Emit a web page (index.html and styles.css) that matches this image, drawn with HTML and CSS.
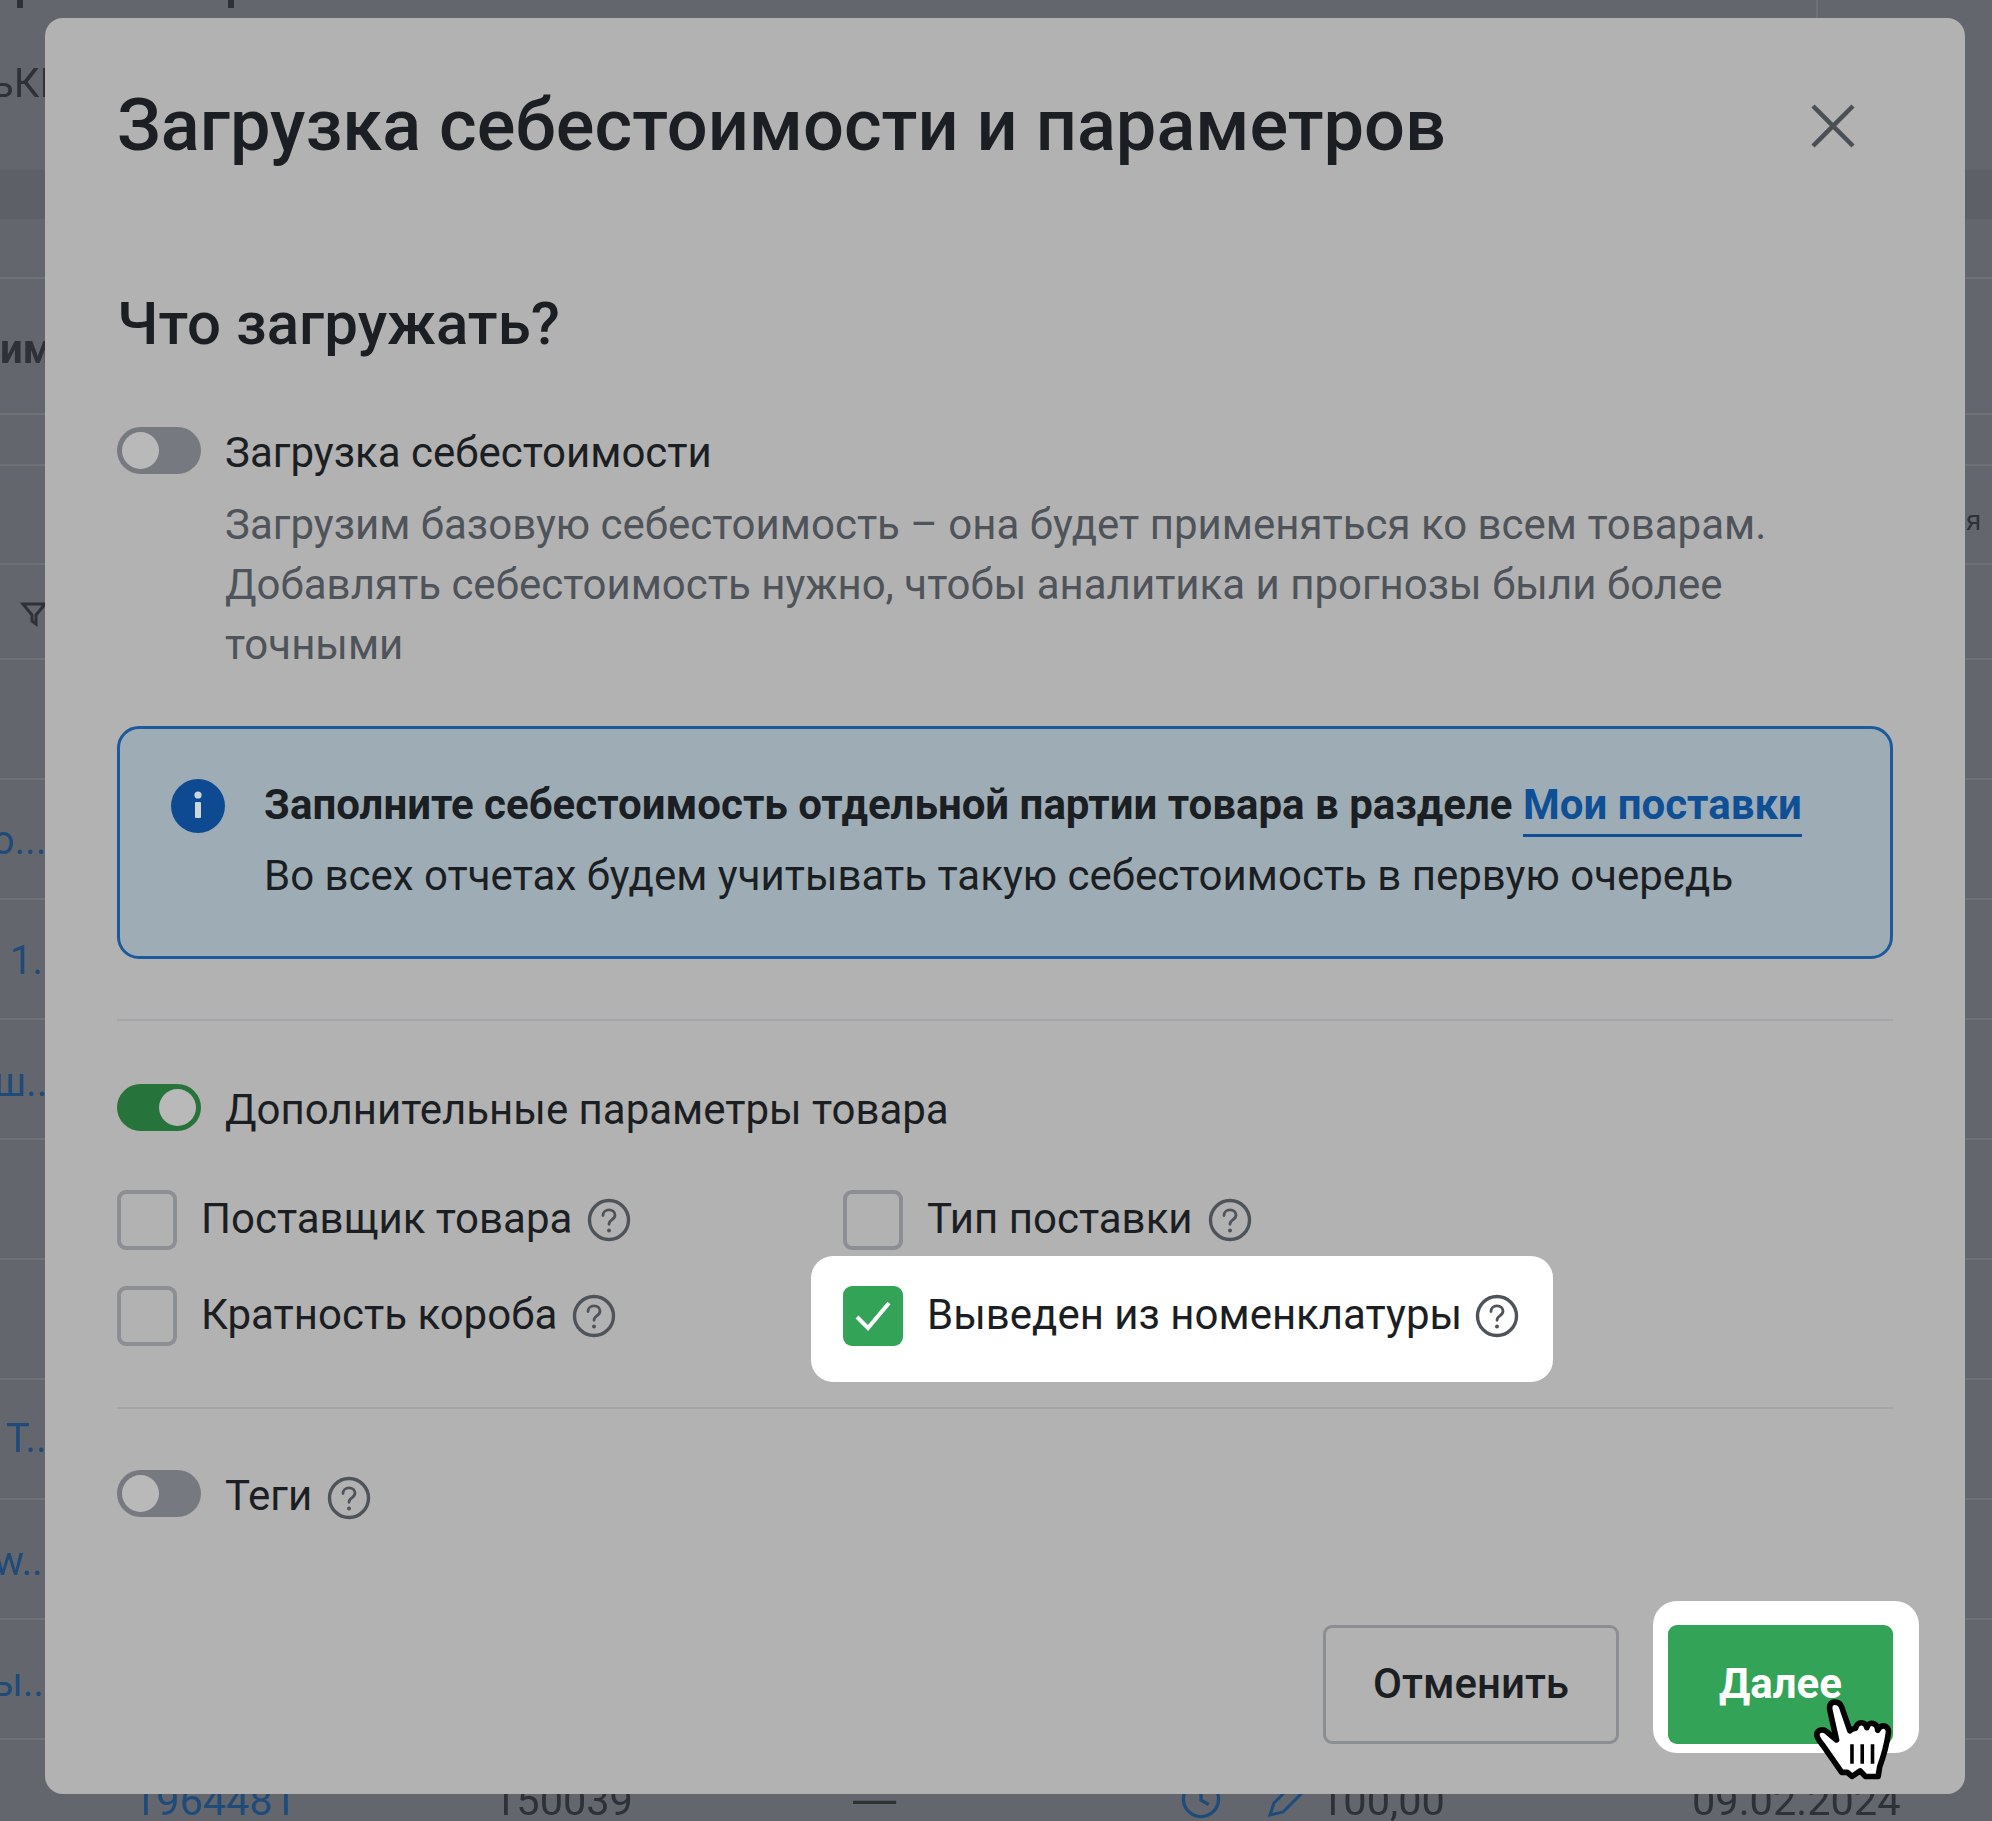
FILE: index.html
```html
<!DOCTYPE html>
<html lang="ru">
<head>
<meta charset="utf-8">
<title>Загрузка себестоимости и параметров</title>
<link rel="stylesheet" href="styles.css">
</head>
<body>
<svg class="defs" aria-hidden="true">
  <symbol id="help" viewBox="0 0 44 44">
    <circle cx="22" cy="22" r="19.5" fill="none" stroke="currentColor" stroke-width="3.4"/>
    <path d="M16 17.5c0-3.4 2.6-5.6 6-5.6s6 2.2 6 5.2c0 2.4-1.4 3.6-3.2 4.8-1.8 1.2-2.8 2.2-2.8 4.4" fill="none" stroke="currentColor" stroke-width="2.8" stroke-linecap="round"/>
    <circle cx="22" cy="32.4" r="2" fill="currentColor"/>
  </symbol>
</svg>

<div class="page">
  <div class="row row-top"><span class="cut cut-stem"></span><span class="cut cut-stem2"></span><span class="vline"></span></div>
  <div class="row row-band"></div>
  <div class="row"></div>
  <div class="row"></div>
  <div class="row"></div>
  <div class="row"></div>
  <div class="row"></div>
  <div class="row"></div>
  <div class="row"></div>
  <div class="row"></div>
  <div class="row"></div>
  <div class="row"></div>
  <div class="row"></div>
  <div class="row"></div>
  <div class="row"></div>
  <div class="row"></div>
  <div class="row row-last">
    <span class="link-cell">1964481</span>
    <span>150039</span>
    <span class="dash">—</span>
    <svg class="bg-icon" viewBox="0 0 40 40"><circle cx="20" cy="20" r="16" fill="none" stroke="currentColor" stroke-width="3"/><path d="M20 10v11l7 4" fill="none" stroke="currentColor" stroke-width="3"/></svg>
    <svg class="bg-icon" viewBox="0 0 44 40"><path d="M6 36l4-12L30 4l9 9-20 20z" fill="none" stroke="currentColor" stroke-width="3"/></svg>
    <span class="num">100,00</span>
    <span class="date">09.02.2024</span>
  </div>
</div>

<div class="bg-notes">
  <span class="note note-1">ьКІ</span>
  <span class="note note-2">им</span>
  <svg class="note note-funnel" viewBox="0 0 28 28"><path d="M3 4h22l-9 11v9l-4-3v-6z" fill="none" stroke="currentColor" stroke-width="3"/></svg>
  <span class="note note-link note-3">о...</span>
  <span class="note note-link note-4">1..</span>
  <span class="note note-link note-5">ш..</span>
  <span class="note note-link note-6">Т..</span>
  <span class="note note-link note-7">w..</span>
  <span class="note note-link note-8">ы...</span>
  <span class="note note-9">я</span>
</div>

<section class="modal">
  <header class="modal-head">
    <h1 class="modal-title">Загрузка себестоимости и параметров</h1>
    <svg class="close" viewBox="0 0 46 44"><path d="M3 2l40 40M43 2L3 42" fill="none" stroke="currentColor" stroke-width="4.5"/></svg>
  </header>

  <h2 class="section-title">Что загружать?</h2>

  <div class="toggle-row first">
    <span class="toggle"></span>
    <span>Загрузка себестоимости</span>
  </div>
  <p class="desc">Загрузим базовую себестоимость – она будет применяться ко всем товарам.<br>Добавлять себестоимость нужно, чтобы аналитика и прогнозы были более<br>точными</p>

  <div class="info">
    <svg class="info-icon" viewBox="0 0 54 54"><circle cx="27" cy="27" r="27" fill="currentColor"/><circle cx="27" cy="16" r="3.6" fill="#cfd6da"/><rect x="24" y="23" width="6" height="16" rx="1" fill="#cfd6da"/></svg>
    <div class="info-text">
      <p class="info-strong">Заполните себестоимость отдельной партии товара в разделе <a class="info-link">Мои поставки</a></p>
      <p class="info-plain">Во всех отчетах будем учитывать такую себестоимость в первую очередь</p>
    </div>
  </div>

  <hr class="sep sep-a">

  <div class="toggle-row">
    <span class="toggle on"></span>
    <span>Дополнительные параметры товара</span>
  </div>

  <div class="checks">
    <div class="check-item"><span class="box"></span><span class="check-label">Поставщик товара</span><svg class="help"><use href="#help"/></svg></div>
    <div class="check-item"><span class="box"></span><span class="check-label">Тип поставки</span><svg class="help"><use href="#help"/></svg></div>
    <div class="check-item"><span class="box"></span><span class="check-label">Кратность короба</span><svg class="help"><use href="#help"/></svg></div>
    <div class="check-item spot">
      <span class="box checked"><svg viewBox="0 0 60 60"><path d="M14 31l11 11 21-25" fill="none" stroke="#fff" stroke-width="4"/></svg></span>
      <span class="check-label">Выведен из номенклатуры</span><svg class="help"><use href="#help"/></svg>
    </div>
  </div>

  <hr class="sep sep-b">

  <div class="toggle-row tags">
    <span class="toggle"></span>
    <span>Теги</span><svg class="help help-tag"><use href="#help"/></svg>
  </div>

  <footer class="actions">
    <button class="btn btn-ghost">Отменить</button>
    <div class="btn-spot">
      <button class="btn btn-green">Далее</button>
      <svg class="hand" viewBox="0 0 76 80">
        <path d="M20 4C16 4 14.500 8 15.500 12L22 41 12.500 33C7.500 29 1.500 32 3 37.500 4 40.500 6 43 8.500 46L27 72.500H32.500L37 76.500 45 71 50 76.500H62.500L64 67C68 56 71 45 72.500 34 73.500 26.500 65 24.500 62 31.500 62 24 53.500 22 51.500 29 50.500 23 42.500 22 40.500 29.500 38.500 30 37 30 35 32L27 9C26 5.500 23.500 4 20 4Z" fill="#fff" stroke="#000" stroke-width="5.500" stroke-linejoin="round"/>
        <path d="M37 45v19M47 45v19M57 45v19" stroke="#000" stroke-width="3.500" fill="none"/>
      </svg>
    </div>
  </footer>
</section>
</body>
</html>
```
FILE: styles.css
```css
* { box-sizing: border-box; }
html, body { margin: 0; height: 100%; }
body {
  background: #63666c;
  font-family: Roboto, "Liberation Sans", sans-serif;
  font-size: 42px;
  color: #1b1e22;
  overflow: hidden;
  position: relative;
  width: 1992px;
  height: 1821px;
  filter: blur(0.6px);
}
.defs { position: absolute; width: 0; height: 0; }

/* dimmed table behind the dialog */
.page {
  display: grid;
  height: 1821px;
  grid-template-rows: 170px 49px 60px 136px 51px 99px 95px repeat(9, 120px) 1fr;
  color: #2e3136;
}
.row { border-bottom: 2px solid #6f7175; position: relative; }
.row-top { border-bottom: 0; }
.row-band { background: #5d6066; border-bottom: 0; }
.row-last {
  border-bottom: 0;
  display: grid;
  grid-template-columns: 360px 356px 330px 85px 56px 372px 1fr;
  padding-left: 133px;
  font-size: 41.5px;
  line-height: 48px;
  padding-top: 37px;
  align-items: start;
}
.link-cell { color: #1f4b7a; }
.dash { color: #2e3136; font-size: 66px; font-weight: 300; line-height: 54px; }
.bg-icon { width: 44px; height: 44px; color: #1f4b7a; }
.cut { position: absolute; top: 0; width: 6px; height: 8px; background: #2e3136; }
.cut-stem { left: 17px; }
.cut-stem2 { left: 228px; }
.vline { position: absolute; left: 1816px; top: 0; width: 2px; height: 18px; background: #6f7175; }

.bg-notes { color: #2e3136; font-size: 40px; }
.note { position: absolute; line-height: 40px; white-space: nowrap; }
.note-link { color: #1f4b7a; }
.note-1 { left: -8px; top: 64px; }
.note-2 { left: 0; top: 330px; font-weight: 700; }
.note-funnel { left: 20px; top: 600px; width: 28px; height: 28px; }
.note-3 { left: -8px; top: 821px; }
.note-4 { left: 10px; top: 941px; }
.note-5 { left: -6px; top: 1063px; }
.note-6 { left: 6px; top: 1419px; }
.note-7 { left: -6px; top: 1542px; }
.note-8 { left: -8px; top: 1663px; }
.note-9 { left: 1966px; top: 501px; font-size: 28px; }

/* dialog */
.modal {
  position: absolute;
  left: 45px;
  top: 18px;
  width: 1920px;
  height: 1776px;
  padding: 0 72px;
  background: #b2b2b2;
  border-radius: 18px;
}
.modal-head {
  height: 216px;
  display: flex;
  align-items: center;
  justify-content: space-between;
  padding-right: 37px;
}
.modal-title { margin: 0; font-size: 72.15px; font-weight: 500; line-height: 60px; }
.close { width: 46px; height: 44px; color: #4b5057; }
.section-title { margin: 60px 0 0; font-size: 60px; font-weight: 500; line-height: 60px; }

.toggle-row { display: flex; line-height: 60px; }
.toggle-row.first { margin-top: 69px; }
.toggle-row.tags { margin-top: 57px; }
.toggle {
  flex: none;
  width: 84px;
  height: 47px;
  margin: 4px 24px 0 0;
  border-radius: 24px;
  background: #767a80;
  position: relative;
}
.toggle::after {
  content: "";
  position: absolute;
  left: 5px;
  top: 5px;
  width: 37px;
  height: 37px;
  border-radius: 50%;
  background: #b9b9b9;
}
.toggle.on { background: #27733c; }
.toggle.on::after { left: 42px; }

.desc {
  margin: 12px 0 0 108px;
  color: #4f545b;
  line-height: 60px;
}

.info {
  margin-top: 51px;
  height: 233px;
  border: 3px solid #1c5a9c;
  border-radius: 22px;
  background: #9eadb5;
  display: flex;
  padding: 50px 0 0 51px;
  gap: 39px;
}
.info-icon { flex: none; width: 54px; height: 54px; color: #0d4a92; }
.info-text p { margin: 0; line-height: 71px; }
.info-text { margin-top: -10px; }
.info-strong { font-weight: 700; }
.info-link { color: #0f4f96; border-bottom: 3px solid #0f4f96; font-weight: 700; padding-bottom: 5px; }

.sep { border: 0; height: 2px; background: #a3a5a8; margin: 0; }
.sep-a { margin: 60px 0 59px; }
.sep-b { margin-top: 61px; }

.checks {
  display: grid;
  grid-template-columns: 726px 1fr;
  grid-auto-rows: 60px;
  row-gap: 36px;
  margin-top: 50px;
}
.check-item { display: flex; align-items: center; line-height: 60px; }
.check-label { margin-top: -3px; }
.box {
  flex: none;
  width: 60px;
  height: 60px;
  margin-right: 24px;
  border: 4px solid #8b8e92;
  border-radius: 9px;
}
.box.checked { background: #33a457; border: 0; }
.box.checked svg { display: block; width: 60px; height: 60px; }
.help { flex: none; width: 44px; height: 44px; margin-left: 15px; color: #4f545b; }
.help-tag { margin-top: 10px; }
.spot {
  justify-self: start;
  height: 126px;
  margin: -30px 0 0 -32px;
  padding: 0 34px 6px 32px;
  background: #fff;
  border-radius: 22px;
}
.spot .help { margin-left: 13px; }

.actions {
  margin-top: 99px;
  display: flex;
  justify-content: flex-end;
  align-items: flex-start;
  gap: 49px;
}
.btn {
  height: 119px;
  padding-bottom: 3px;
  border-radius: 9px;
  font: 500 42px Roboto, "Liberation Sans", sans-serif;
}
.btn-ghost { width: 296px; background: transparent; border: 3px solid #8b8e92; color: #1b1e22; }
.btn-green { display: block; width: 225px; background: #33a457; border: 0; color: #fff; font-weight: 700; }
.btn-spot {
  position: relative;
  margin: -24px -26px -9px -15px;
  padding: 24px 26px 9px 15px;
  background: #fff;
  border-radius: 24px;
}
.hand { position: absolute; left: 161px; top: 96px; width: 78px; height: 84px; }
```
